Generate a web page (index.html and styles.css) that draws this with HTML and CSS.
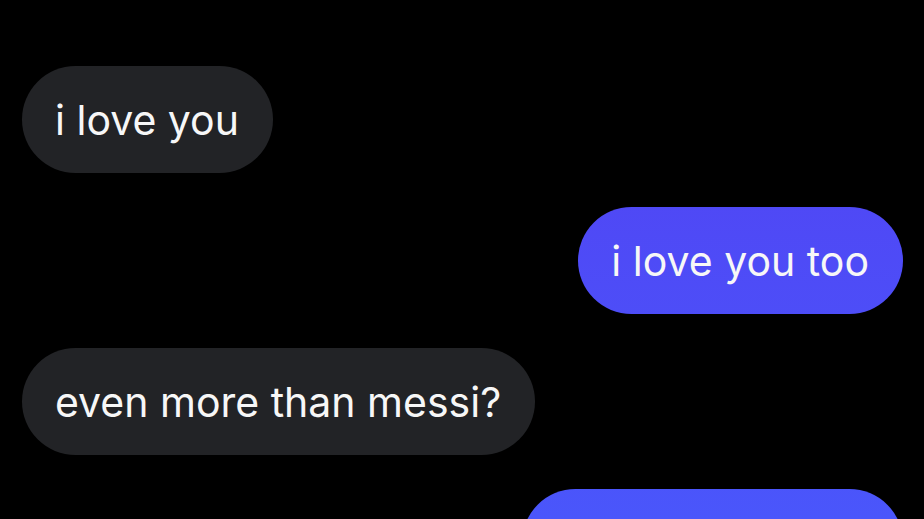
FILE: index.html
```html
<!DOCTYPE html>
<html lang="en">
<head>
<meta charset="utf-8">
<title>Chat</title>
<link rel="stylesheet" href="styles.css">
</head>
<body>
<main class="thread">
  <div class="msg in">i love you</div>
  <div class="msg out">i love you too</div>
  <div class="msg in">even more than messi?</div>
  <div class="msg out last"></div>
</main>
</body>
</html>
```
FILE: styles.css
```css
html, body {
  margin: 0;
  padding: 0;
  background: #000;
  height: 100%;
  overflow: hidden;
}
.thread {
  display: flex;
  flex-direction: column;
  gap: 34px;
  padding: 66px 21px 0 22px;
  font-family: "Inter", "Liberation Sans", sans-serif;
}
.msg {
  box-sizing: border-box;
  height: 107px;
  display: flex;
  align-items: center;
  padding: 0 34px 0 33px;
  border-radius: 54px;
  font-size: 41px;
  color: #f7f7f7;
  white-space: nowrap;
}
.in {
  align-self: flex-start;
  background: #222326;
}
.out {
  align-self: flex-end;
  background: linear-gradient(180deg, #5240f2 0%, #4a56fb 100%) fixed;
}
.last {
  width: 381px;
}
```
